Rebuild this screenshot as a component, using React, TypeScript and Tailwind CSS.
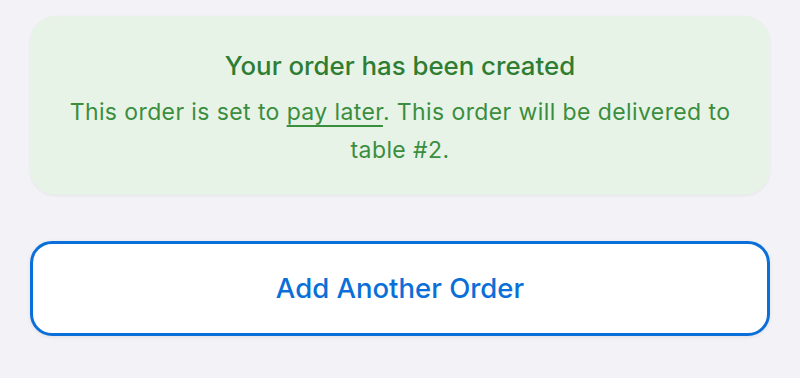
export default function App() {
  return (
    <div
      className="min-h-[378px] w-[800px] bg-[#f2f2f7] px-[30px] pt-[16px]"
      style={{ fontFamily: 'Inter, "Noto Sans", sans-serif' }}
    >
      <div className="flex h-[179px] flex-col items-center rounded-[26px] bg-[#e8f3e8] px-[32px] pt-[33px] text-center shadow-[0_1px_3px_rgba(0,0,0,0.06)]">
        <h2 className="text-[25.8px] font-medium leading-[34px] text-[#2e7d32]">Your order has been created</h2>
        <p className="mt-[10px] text-[23px] leading-[38px] tracking-[0.4px] text-[#3a8e3e]">
          This order is set to <span className="underline underline-offset-[5px]">pay later</span>. This order will be delivered to table #2.
        </p>
      </div>
      <button className="mt-[46px] flex h-[95px] w-full items-center justify-center rounded-[22px] border-[3px] border-[#0a6fd8] bg-white text-[27.5px] font-medium text-[#0a6fd8] shadow-[0_1px_4px_rgba(0,0,0,0.08)]">
        Add Another Order
      </button>
    </div>
  );
}
